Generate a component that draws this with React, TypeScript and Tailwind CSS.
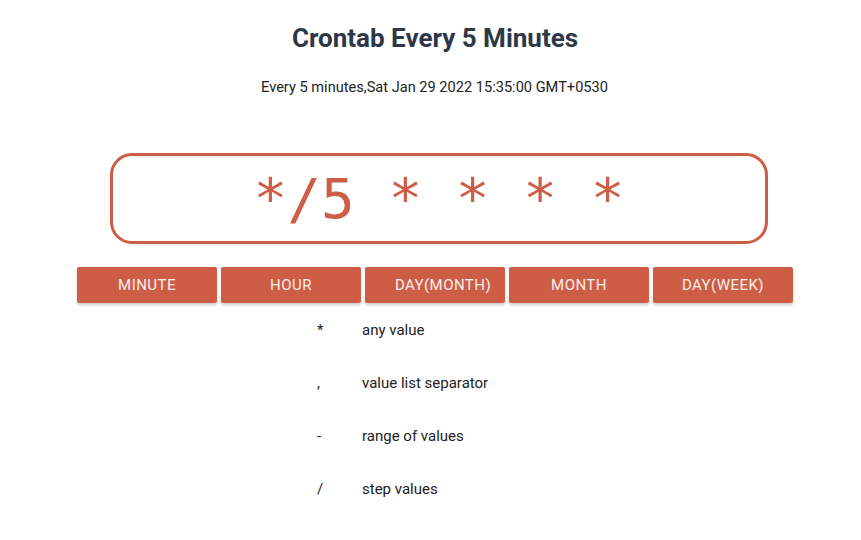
const fields = ["MINUTE", "HOUR", "DAY(MONTH)", "MONTH", "DAY(WEEK)"];

const legend = [
  { sym: "*", text: "any value" },
  { sym: ",", text: "value list separator" },
  { sym: "-", text: "range of values" },
  { sym: "/", text: "step values" },
];

const App = () => {
  return (
    <div className="min-h-[540px] w-full bg-white font-['Roboto',sans-serif]">
      <div className="flex flex-col items-center pt-[22px]">
        <h1 className="ml-[9px] text-[26px] font-bold leading-[32px] text-[#2d3748]">
          Crontab Every 5 Minutes
        </h1>
        <p className="ml-[8px] mt-[23px] text-[14.6px] leading-[20px] text-[#222]">
          Every 5 minutes,Sat Jan 29 2022 15:35:00 GMT+0530
        </p>
      </div>

      <div className="ml-[110px] mt-[56px] flex h-[91px] w-[658px] items-center justify-center rounded-[22px] border-[3px] border-[#cd5d44]">
        <span className="whitespace-pre font-['DejaVu_Sans_Mono',monospace] text-[56px] leading-none text-[#cd5d44]">
          */5 * * * *
        </span>
      </div>

      <div className="ml-[77px] mt-[23px] flex gap-[4px]">
        {fields.map((f) => (
          <div
            key={f}
            className={
              "flex h-[36px] w-[140px] items-center justify-center rounded-[2px] bg-[#cd5d44] pt-[1px] text-[15px] tracking-[0.03em] text-white/90 shadow-[0_2px_3px_rgba(0,0,0,0.2)] " +
              (f === "DAY(MONTH)" ? "pl-[16px]" : "")
            }
          >
            {f}
          </div>
        ))}
      </div>

      <div className="ml-[317px] mt-[17px] flex flex-col gap-[33px]">
        {legend.map((l) => (
          <div key={l.text} className="flex h-[20px] items-center text-[15px] text-[#222]">
            <span className="w-[45px]">{l.sym}</span>
            <span>{l.text}</span>
          </div>
        ))}
      </div>
    </div>
  );
};

export default App;
